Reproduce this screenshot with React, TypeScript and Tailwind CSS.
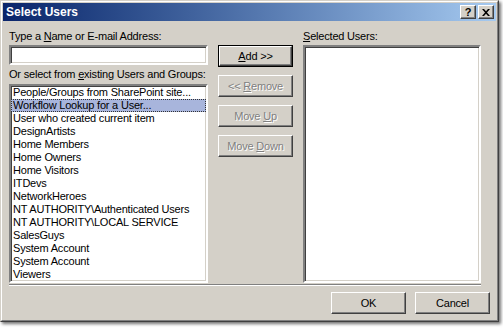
import type { ReactNode } from "react";

const FONT = "font-['Liberation_Sans',Arial,sans-serif]";

const USERS = [
  "People/Groups from SharePoint site...",
  "Workflow Lookup for a User...",
  "User who created current item",
  "DesignArtists",
  "Home Members",
  "Home Owners",
  "Home Visitors",
  "ITDevs",
  "NetworkHeroes",
  "NT AUTHORITY\\Authenticated Users",
  "NT AUTHORITY\\LOCAL SERVICE",
  "SalesGuys",
  "System Account",
  "System Account",
  "Viewers",
];

const sunken =
  "border-2 border-t-[#808080] border-l-[#808080] border-b-white border-r-white shadow-[inset_1px_1px_0_#404040,inset_-1px_-1px_0_#d4d0c8] bg-white";

function U({ children }: { children: ReactNode }) {
  return <span className="underline underline-offset-[1px]">{children}</span>;
}

function Button({
  children,
  disabled,
  isDefault,
  className = "",
}: {
  children: ReactNode;
  disabled?: boolean;
  isDefault?: boolean;
  className?: string;
}) {
  const face = (
    <div
      className={`flex h-full w-full items-center justify-center border border-t-white border-l-white border-b-[#404040] border-r-[#404040] shadow-[inset_-1px_-1px_0_#808080,inset_1px_1px_0_#d4d0c8] bg-[#d4d0c8] text-[11px] leading-[13px] ${
        disabled ? "text-[#808080] [text-shadow:1px_1px_0_#ffffff]" : "text-black"
      }`}
    >
      {children}
    </div>
  );
  if (isDefault) {
    return <div className={`border border-black ${className}`}>{face}</div>;
  }
  return <div className={className}>{face}</div>;
}

function TitleButton({ children }: { children: ReactNode }) {
  return (
    <div className="flex h-[14px] w-[16px] items-center justify-center border border-t-white border-l-white border-b-[#404040] border-r-[#404040] bg-[#d4d0c8] text-[11px] font-bold leading-none text-black shadow-[inset_-1px_-1px_0_#808080]">
      {children}
    </div>
  );
}

export default function App() {
  return (
    <div className={`h-[328px] w-[503px] overflow-hidden bg-white ${FONT}`}>
      <div className="h-[322px] w-[499px] border border-t-[#d4d0c8] border-l-[#d4d0c8] border-b-[#404040] border-r-[#404040] bg-[#d4d0c8] shadow-[2px_2px_3px_rgba(0,0,0,0.55)]">
        <div className="flex h-full flex-col border border-t-white border-l-white border-b-[#808080] border-r-[#808080] p-px">
          {/* title bar */}
          <div className="flex h-[18px] items-center justify-between bg-gradient-to-r from-[#0a246a] to-[#a6caf0] pl-[3px] pr-[2px]">
            <span className="text-[12px] font-bold leading-none text-white">Select Users</span>
            <div className="flex gap-[2px]">
              <TitleButton>?</TitleButton>
              <TitleButton>
                <svg width="8" height="7" viewBox="0 0 8 7">
                  <path d="M0 0h2l2 2.2L6 0h2L5 3.5 8 7H6L4 4.8 2 7H0l3-3.5z" fill="#000" />
                </svg>
              </TitleButton>
            </div>
          </div>

          <div className="flex flex-1 flex-col px-[6px] pt-[9px] text-[11px] leading-[13px] tracking-[-0.2px] text-black">
            <div className="flex">
              {/* left column */}
              <div className="flex w-[199px] shrink-0 flex-col">
                <div className="whitespace-nowrap">
                  Type a <U>N</U>ame or E-mail Address:
                </div>
                <div className={`mt-[2px] h-[20px] w-[199px] ${sunken}`} />
                <div className="mt-[3px] whitespace-nowrap">
                  Or select from <U>e</U>xisting Users and Groups:
                </div>
                <div className={`mt-[3px] h-[199px] w-[199px] overflow-hidden ${sunken}`}>
                  {USERS.map((u, i) => (
                    <div
                      key={i}
                      className={`h-[13px] whitespace-nowrap pl-[1px] leading-[11px] ${
                        i === 1
                          ? "border border-dotted border-[#333] bg-[#a8b5dc]"
                          : "border border-transparent"
                      }`}
                    >
                      {u}
                    </div>
                  ))}
                </div>
              </div>

              {/* buttons */}
              <div className="ml-[10px] flex w-[75px] shrink-0 flex-col gap-[8px] pt-[15px]">
                <Button isDefault className="h-[22px]">
                  <span>
                    <U>A</U>dd &gt;&gt;
                  </span>
                </Button>
                <Button disabled className="h-[22px]">
                  <span>
                    &lt;&lt; <U>R</U>emove
                  </span>
                </Button>
                <Button disabled className="h-[22px]">
                  <span>
                    Move <U>U</U>p
                  </span>
                </Button>
                <Button disabled className="h-[22px]">
                  <span>
                    Move <U>D</U>own
                  </span>
                </Button>
              </div>

              {/* right column */}
              <div className="ml-[10px] flex w-[178px] shrink-0 flex-col">
                <div className="whitespace-nowrap">
                  <U>S</U>elected Users:
                </div>
                <div className={`mt-[2px] h-[238px] w-[178px] ${sunken}`} />
              </div>
            </div>

            <div className="mt-[1px] h-[2px] w-[472px] border-t border-t-[#808080] border-b border-b-white" />

            <div className="mt-[6px] flex justify-end gap-[9px]">
              <Button className="h-[22px] w-[75px]">OK</Button>
              <Button className="h-[22px] w-[75px]">Cancel</Button>
            </div>
          </div>
        </div>
      </div>
    </div>
  );
}
